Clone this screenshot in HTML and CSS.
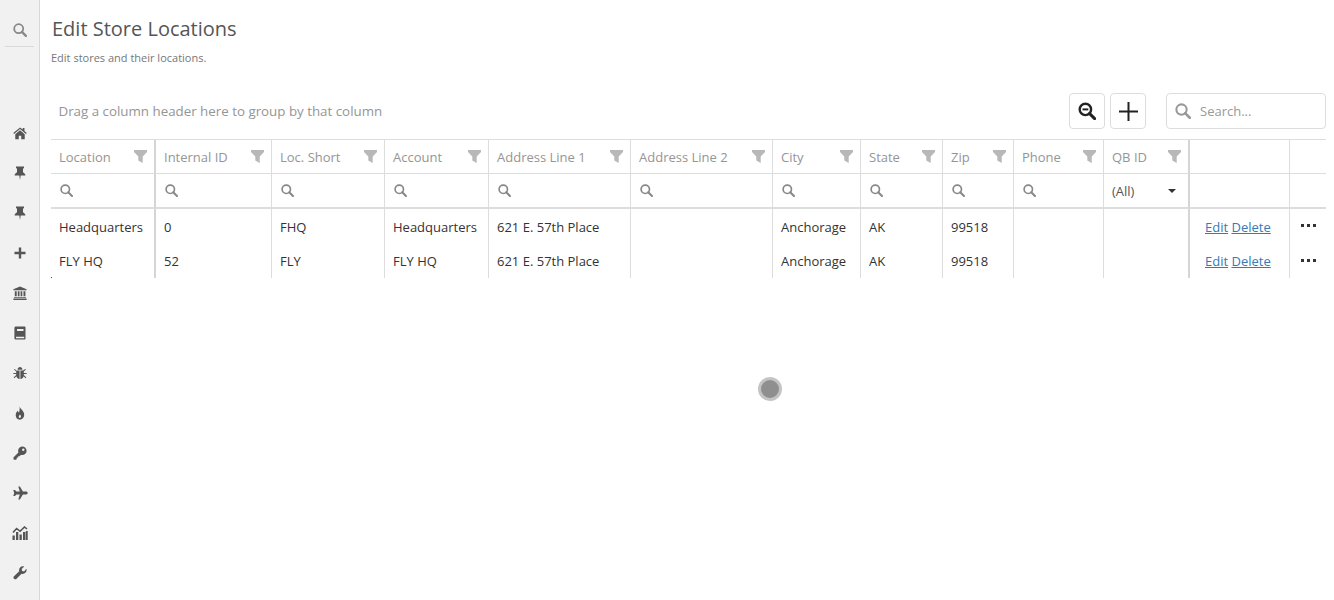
FILE: index.html
```html
<!DOCTYPE html>
<html lang="en">
<head>
<meta charset="utf-8">
<title>Edit Store Locations</title>
<link rel="stylesheet" href="styles.css">
</head>
<body>
<svg class="defs" width="0" height="0" aria-hidden="true">
  <symbol id="mag" viewBox="0 0 14 14"><circle cx="5.700" cy="5.700" r="4.500" fill="none" stroke="currentColor" stroke-width="1.800"/><path d="M8.900 8.900l4 4" stroke="currentColor" stroke-width="2.200" stroke-linecap="round"/></symbol>
  <symbol id="funnel" viewBox="0 0 13 13"><path d="M0 0h13v2L8.700 6.500V13L4.300 10.500v-4L0 2z" fill="currentColor"/></symbol>
</svg>
<div class="app">
  <nav class="side">
    <div class="side-search"><svg class="side-ic"><use href="#mag"/></svg></div>
    <ul class="side-list">
      <li><svg class="side-ic" viewBox="0 0 16 14"><path d="M8 .6L.3 7l.9 1L8 2.500 14.800 8l.9-1-2.600-2.200V1.200h-2v1.900zM2.600 8.300V14h4V10h2.800v4h4V8.300L8 3.900z"/></svg></li>
      <li><svg class="side-ic" viewBox="0 0 14 14"><path d="M3 .4h8v1.500l-1 .8v3.500c1.500.8 2.400 1.900 2.400 3.300H7.700L7 14l-.7-4.500H1.600c0-1.400.9-2.500 2.400-3.300V2.700l-1-.8z"/></svg></li>
      <li><svg class="side-ic" viewBox="0 0 14 14"><path d="M3 .4h8v1.500l-1 .8v3.500c1.500.8 2.400 1.900 2.400 3.300H7.700L7 14l-.7-4.500H1.600c0-1.400.9-2.500 2.400-3.300V2.700l-1-.8z"/></svg></li>
      <li><svg class="side-ic" viewBox="0 0 14 14"><path d="M5.800 1.500h2.400v4.300h4.300v2.400H8.200v4.300H5.800V8.200H1.500V5.800h4.300z"/></svg></li>
      <li><svg class="side-ic" viewBox="0 0 14 14"><path d="M7 .5L.4 3.300v1h13.200v-1zM1.800 5.200v5h1.900v-5zm3 0v5h1.700v-5zm2.800 0v5h1.700v-5zm2.900 0v5h1.900v-5zM1 11v.8h12V11zM.4 12.400V14h13.200v-1.600z"/></svg></li>
      <li><svg class="side-ic" viewBox="0 0 14 14"><path d="M3 .5h8.500c.6 0 1 .4 1 1v11c0 .6-.4 1-1 1H3c-1 0-1.600-.7-1.600-1.600V2.100C1.400 1.200 2 .5 3 .5zm1 2.600v1.800h6.500V3.100zM3 10.800v1.500h8.200v-1.500z"/></svg></li>
      <li><svg class="side-ic" viewBox="0 0 14 14"><path d="M4.600 3.700C4.700 2 5.700 1 7 1s2.300 1 2.400 2.700zM4 4.500h2.600V13C4.800 12.800 3.600 11.800 3.400 10.300L1.300 12.300l-.7-.8 2.600-2.400V7.900H.4v-1h2.800V5.600L1 3.600l.7-.7 2.300 2zM7.400 4.500H10l2.300-1.600.7.700-2.200 2v1.300h2.800v1h-2.800v1.200l2.600 2.400-.7.800-2.100-2c-.2 1.500-1.400 2.500-3.200 2.700z"/></svg></li>
      <li><svg class="side-ic" viewBox="0 0 14 14"><path d="M6.500.5c.6 2.300 4.700 4.200 4.700 8.300 0 3-2 4.900-4.400 4.900S2.700 11.800 2.700 9c0-1.800 1-3.200 2.200-4.200.2 1 .6 1.500 1.200 1.700C6.500 4.500 6.900 2.700 6.500.5zM7 8.400c-.8.800-1.300 1.500-1.300 2.300 0 .8.500 1.200 1.100 1.200s1.200-.5 1.200-1.300C8 9.800 7.600 9 7 8.400z"/></svg></li>
      <li><svg class="side-ic" viewBox="0 0 14 14"><path d="M9.300.5a4.300 4.300 0 0 1 0 8.600c-.5 0-1-.1-1.400-.2L6.500 10.200H5.200v1.400H3.800V13l-.9.700H.7L.4 11.500l5-5a4.300 4.300 0 0 1 3.900-6zm1 2a1.200 1.200 0 1 0 0 2.400 1.200 1.200 0 0 0 0-2.400z"/></svg></li>
      <li><svg class="side-ic side-wide" viewBox="0 0 16 14"><path d="M6.300.6h1.600l3 5h3.300c.8 0 1.500.7 1.500 1.400s-.7 1.400-1.500 1.400h-3.300l-3 5H6.300L7.800 8.400H4.400L3 10H1.300l.9-3-.9-3H3l1.400 1.600h3.400z"/></svg></li>
      <li><svg class="side-ic side-wide" viewBox="0 0 16 14"><path d="M1 6.500l3.600-4 3.500 2.800L12.500 1l2.500 2" fill="none" stroke="currentColor" stroke-width="1.600"/><path d="M.5 9.500h2.300v4.500H.5zM4 6h2.300v8H4zM7.500 8.500h2.300V14H7.500zM11 6h2.300v8H11zM13.800 5h1.900v9h-1.900z"/></svg></li>
      <li><svg class="side-ic" viewBox="0 0 14 14"><path d="M13.400 2.700c.5 1.500.1 3-1 4.100-1.100 1.100-2.500 1.400-3.900.9L3.300 13a1.800 1.800 0 0 1-2.500-2.500L6.200 5.300c-.4-1.400-.1-2.800.9-3.800C8.200.4 9.700 0 11.200.5L8.700 3l.4 2 2 .4z"/></svg></li>
    </ul>
  </nav>
  <main class="main">
    <h1 class="title">Edit Store Locations</h1>
    <p class="subtitle">Edit stores and their locations.</p>
    <div class="toolbar">
      <span class="group-hint">Drag a column header here to group by that column</span>
      <div class="tools">
        <button class="tool-btn" type="button" aria-label="Zoom out">
          <svg class="tool-ic" viewBox="0 0 18 18"><circle cx="7.400" cy="7.400" r="5.700" fill="none" stroke="currentColor" stroke-width="2.400"/><path d="M4.500 7.400h5.800" stroke="currentColor" stroke-width="2"/><path d="M11.600 11.600l5 5" stroke="currentColor" stroke-width="3" stroke-linecap="round"/></svg>
        </button>
        <button class="tool-btn" type="button" aria-label="Add">
          <svg class="tool-ic tool-plus" viewBox="0 0 19 19"><path d="M9.500 0v19M0 9.500h19" stroke="currentColor" stroke-width="2"/></svg>
        </button>
        <div class="search-box">
          <svg class="search-ic"><use href="#mag"/></svg>
          <span class="search-text">Search...</span>
        </div>
      </div>
    </div>
    <table class="grid">
      <colgroup>
        <col class="c1"><col class="c2"><col class="c3"><col class="c4"><col class="c5"><col class="c6"><col class="c7"><col class="c8"><col class="c9"><col class="c10"><col class="c11"><col class="c12"><col class="c13">
      </colgroup>
      <thead>
        <tr class="head">
          <th class="fixed-r"><div class="th">Location<svg class="fn"><use href="#funnel"/></svg></div></th>
          <th><div class="th">Internal ID<svg class="fn"><use href="#funnel"/></svg></div></th>
          <th><div class="th">Loc. Short<svg class="fn"><use href="#funnel"/></svg></div></th>
          <th><div class="th">Account<svg class="fn"><use href="#funnel"/></svg></div></th>
          <th><div class="th">Address Line 1<svg class="fn"><use href="#funnel"/></svg></div></th>
          <th><div class="th">Address Line 2<svg class="fn"><use href="#funnel"/></svg></div></th>
          <th><div class="th">City<svg class="fn"><use href="#funnel"/></svg></div></th>
          <th><div class="th">State<svg class="fn"><use href="#funnel"/></svg></div></th>
          <th><div class="th">Zip<svg class="fn"><use href="#funnel"/></svg></div></th>
          <th><div class="th">Phone<svg class="fn"><use href="#funnel"/></svg></div></th>
          <th class="fixed-r"><div class="th">QB ID<svg class="fn"><use href="#funnel"/></svg></div></th>
          <th></th>
          <th></th>
        </tr>
        <tr class="filter">
          <td class="fixed-r"><svg class="fl"><use href="#mag"/></svg></td>
          <td><svg class="fl"><use href="#mag"/></svg></td>
          <td><svg class="fl"><use href="#mag"/></svg></td>
          <td><svg class="fl"><use href="#mag"/></svg></td>
          <td><svg class="fl"><use href="#mag"/></svg></td>
          <td><svg class="fl"><use href="#mag"/></svg></td>
          <td><svg class="fl"><use href="#mag"/></svg></td>
          <td><svg class="fl"><use href="#mag"/></svg></td>
          <td><svg class="fl"><use href="#mag"/></svg></td>
          <td><svg class="fl"><use href="#mag"/></svg></td>
          <td class="fixed-r"><div class="sel">(All)<span class="caret"></span></div></td>
          <td></td>
          <td></td>
        </tr>
      </thead>
      <tbody>
        <tr class="row">
          <td class="fixed-r">Headquarters</td><td>0</td><td>FHQ</td><td>Headquarters</td><td>621 E. 57th Place</td><td></td><td>Anchorage</td><td>AK</td><td>99518</td><td></td><td class="fixed-r"></td>
          <td class="links"><a href="#">Edit</a> <a href="#">Delete</a></td>
          <td class="more"><span class="dots"><i></i><i></i><i></i></span></td>
        </tr>
        <tr class="row">
          <td class="fixed-r">FLY HQ</td><td>52</td><td>FLY</td><td>FLY HQ</td><td>621 E. 57th Place</td><td></td><td>Anchorage</td><td>AK</td><td>99518</td><td></td><td class="fixed-r"></td>
          <td class="links"><a href="#">Edit</a> <a href="#">Delete</a></td>
          <td class="more"><span class="dots"><i></i><i></i><i></i></span></td>
        </tr>
      </tbody>
    </table>
  </main>
</div>
<div class="speck"></div>
<div class="spinner"></div>
</body>
</html>
```
FILE: styles.css
```css
* { box-sizing: border-box; }
html, body { margin: 0; height: 100%; overflow: hidden; }
body { background: #fff; font-family: "Open Sans", "Noto Sans", sans-serif; font-size: 13px; color: #333; }
.defs { position: absolute; }
.app { display: flex; height: 600px; }

.side { width: 40px; flex: none; background: #f1f1f1; border-right: 1px solid #d8d8d8; color: #555; }
.side-search { height: 47px; margin: 0 5px; padding-top: 23px; border-bottom: 1px solid #d8d8d8; display: flex; justify-content: center; align-items: flex-start; color: #888; }
.side-ic { display: block; width: 14px; height: 14px; fill: currentColor; }
.side-wide { width: 16px; }
.side-list { list-style: none; margin: 0; padding: 66px 0 0; }
.side-list li { height: 40px; display: flex; justify-content: center; align-items: center; }

.main { flex: 1; min-width: 0; padding: 15px 8px 0 11px; }
.title { margin: 0 0 0 1px; font-size: 20px; font-weight: 400; line-height: 27px; color: #555; }
.subtitle { margin: 9px 0 0; font-size: 11px; line-height: 14px; color: #777; }
.toolbar { display: flex; justify-content: space-between; align-items: center; height: 36px; margin-top: 28px; }
.group-hint { padding-left: 7.500px; font-size: 13.330px; color: #959595; }
.tools { display: flex; align-items: center; }
.tool-btn { width: 36px; height: 36px; padding: 0; margin-right: 5px; background: #fff; border: 1px solid #ddd; border-radius: 4px; color: #222; display: flex; align-items: center; justify-content: center; }
.tool-ic { width: 18px; height: 18px; }
.tool-plus { width: 19px; height: 19px; }
.search-box { width: 160px; height: 36px; margin-left: 15px; border: 1px solid #ddd; border-radius: 4px; display: flex; align-items: center; padding-left: 8px; color: #999; }
.search-ic { width: 16px; height: 16px; color: #999; }
.search-text { margin-left: 9px; font-size: 13px; }

.grid { width: 1275px; margin-top: 10px; table-layout: fixed; border-collapse: separate; border-spacing: 0; border-top: 1px solid #ddd; }
.c1 { width: 105px; } .c2 { width: 116px; } .c3 { width: 113px; } .c4 { width: 104px; }
.c5 { width: 142px; } .c6 { width: 142px; } .c7 { width: 88px; } .c8 { width: 82px; }
.c9 { width: 71px; } .c10 { width: 90px; } .c11 { width: 86px; } .c12 { width: 100px; } .c13 { width: 36px; }
.grid th, .grid td { padding: 0 0 0 8px; font-weight: 400; text-align: left; border-right: 1px solid #ddd; white-space: nowrap; }
.grid th:last-child, .grid td:last-child { border-right: 0; }
.grid .fixed-r { border-right: 2px solid #d5d5d5; }
.head th { height: 34px; border-bottom: 1px solid #ddd; color: #959595; }
.th { display: flex; justify-content: space-between; align-items: center; padding-right: 7px; }
.fn { width: 13px; height: 13px; color: #b8b8b8; }
.filter td { height: 35px; border-bottom: 2px solid #ddd; color: #666; }
.fl { display: block; width: 13px; height: 13px; color: #888; margin-left: 1px; }
.sel { display: flex; justify-content: space-between; align-items: center; padding-right: 12px; color: #555; }
.caret { width: 0; height: 0; border-left: 4px solid transparent; border-right: 4px solid transparent; border-top: 4px solid #333; }
.row td { height: 35px; color: #333; }
.row:last-child td { height: 34px; }
.grid .links { padding-left: 15px; }
.links a { color: #337ab7; text-decoration: underline; }
.grid .more { padding-left: 11px; vertical-align: top; }
.dots { display: flex; gap: 3px; margin-top: 15px; }
.dots i { width: 3px; height: 3px; background: #333; }

.speck { position: absolute; left: 51px; top: 277px; width: 1px; height: 1px; background: #444; }
.spinner { position: absolute; left: 758px; top: 377px; width: 24px; height: 24px; border-radius: 50%; background: #8f8f8f; border: 3px solid #c4c4c4; }
```
